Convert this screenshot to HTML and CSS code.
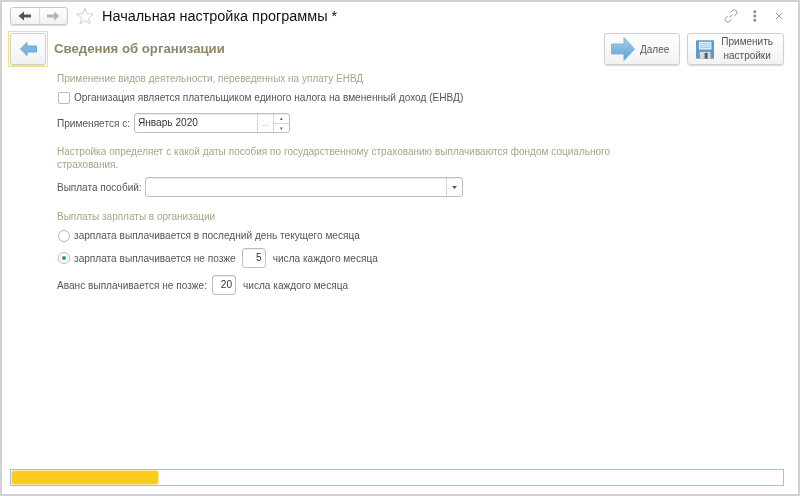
FILE: index.html
```html
<!DOCTYPE html>
<html lang="ru">
<head>
<meta charset="utf-8">
<title>Начальная настройка программы</title>
<link rel="stylesheet" href="styles.css">
</head>
<body>
<div class="window">
  <header class="titlebar">
    <div class="nav">
      <button class="nav-btn"><svg width="14" height="10" viewBox="0 0 14 10"><path d="M0.5 5 L6 0.5 V3.5 H13 V6.5 H6 V9.5 Z" fill="#555"/></svg></button>
      <button class="nav-btn"><svg width="14" height="10" viewBox="0 0 14 10"><path d="M13.5 5 L8 0.5 V3.5 H1 V6.5 H8 V9.5 Z" fill="#b4b4b4"/></svg></button>
    </div>
    <svg class="star" width="18" height="18" viewBox="0 0 18 18"><path d="M9 1 L11.2 6.7 L17.2 7.1 L12.5 11 L14 16.9 L9 13.6 L4 16.9 L5.5 11 L0.8 7.1 L6.8 6.7 Z" fill="#fff" stroke="#d0d0d0"/></svg>
    <h1 class="title">Начальная настройка программы *</h1>
    <div class="win-tools">
      <svg width="14" height="14" viewBox="0 0 14 14" fill="none" stroke="#999" stroke-width="1"><path d="M5.5 8.5 L8.5 5.5 M6.5 3.5 L8.5 1.6 a2.2 2.2 0 0 1 3.6 3.6 L10.2 7.2 M7.5 10.5 L5.5 12.4 a2.2 2.2 0 0 1 -3.6 -3.6 L3.8 6.8"/></svg>
      <svg width="4" height="12" viewBox="0 0 4 12" fill="#888"><rect x="0.5" y="0.5" width="2.6" height="2.6"/><rect x="0.5" y="4.7" width="2.6" height="2.6"/><rect x="0.5" y="8.9" width="2.6" height="2.6"/></svg>
      <svg width="8" height="8" viewBox="0 0 8 8" stroke="#999" stroke-width="1"><path d="M1 1 L7 7 M7 1 L1 7"/></svg>
    </div>
  </header>

  <div class="toolbar">
    <div class="focus-ring">
      <button class="btn back-btn"><svg width="17" height="14" viewBox="0 0 17 14"><path d="M0.5 7 L7 0.5 V4 H16.5 V10 H7 V13.5 Z" fill="#7db5de" stroke="#6fa5cf"/></svg></button>
    </div>
    <h2 class="section">Сведения об организации</h2>
    <button class="btn next-btn"><svg width="24" height="24" viewBox="0 0 24 24"><defs><linearGradient id="a" x1="0" y1="0" x2="0" y2="1"><stop offset="0" stop-color="#a9d2ee"/><stop offset="1" stop-color="#5a9fd2"/></linearGradient></defs><path d="M0.5 7 H13 V0.5 L23.5 12 L13 23.5 V17 H0.5 Z" fill="url(#a)" stroke="#7fb3d8"/></svg><span>Далее</span></button>
    <button class="btn apply-btn"><svg width="19" height="19" viewBox="0 0 19 19"><rect width="19" height="19" rx="1" fill="#5b9bcb"/><rect x="3" y="1.5" width="13" height="8" fill="#e6eef4"/><path d="M4 3.5 H15 M4 5.5 H15 M4 7.5 H15" stroke="#a9c3d6"/><rect x="4" y="12" width="11" height="7" fill="#d8d8d8"/><rect x="9" y="13" width="3" height="6" fill="#555"/></svg><span>Применить<br>настройки</span></button>
  </div>

  <main class="content">
    <p class="group first">Применение видов деятельности, переведенных на уплату ЕНВД</p>
    <label class="row check-row"><span class="checkbox"></span><span class="text">Организация является плательщиком единого налога на вмененный доход (ЕНВД)</span></label>
    <div class="row field-row date-row">
      <span class="text date-label">Применяется с:</span>
      <div class="input date-input">
        <span class="value">Январь 2020</span>
        <span class="cell dots">...</span>
        <span class="cell spin"><i>▴</i><i>▾</i></span>
      </div>
    </div>
    <p class="group note">Настройка определяет с какой даты пособия по государственному страхованию выплачиваются фондом социального страхования.</p>
    <div class="row field-row pay-row">
      <span class="text pay-label">Выплата пособий:</span>
      <div class="input pay-input">
        <span class="value"></span>
        <span class="cell arrow"><svg width="5" height="3" viewBox="0 0 5 3"><path d="M0 0 H5 L2.5 3 Z" fill="#555"/></svg></span>
      </div>
    </div>
    <p class="group salary">Выплаты зарплаты в организации</p>
    <label class="row radio-row"><span class="radio"></span><span class="text">зарплата выплачивается в последний день текущего месяца</span></label>
    <div class="row field-row radio2-row">
      <span class="radio on"></span>
      <span class="text">зарплата выплачивается не позже</span>
      <span class="input num">5</span>
      <span class="text">числа каждого месяца</span>
    </div>
    <div class="row field-row advance-row">
      <span class="text">Аванс выплачивается не позже:</span>
      <span class="input num">20</span>
      <span class="text">числа каждого месяца</span>
    </div>
  </main>

  <div class="progress"><div class="progress-fill"></div></div>
</div>
</body>
</html>
```
FILE: styles.css
```css
* { box-sizing: border-box; }
html, body { margin: 0; padding: 0; }
body { width: 800px; height: 496px; overflow: hidden; background: #fff; font-family: "Liberation Sans", Arial, sans-serif; }
button { font-family: inherit; padding: 0; margin: 0; }

.window { width: 800px; height: 496px; border: 2px solid #d2d2d2; display: flex; flex-direction: column; background: #fff; filter: blur(0.3px); }

.titlebar { height: 29px; padding: 5px 0 0 8px; display: flex; align-items: flex-start; flex: none; }
.nav { width: 58px; height: 18px; display: flex; border: 1px solid #c8c8c8; border-radius: 3px; background: linear-gradient(#fff, #f1f1f1); box-shadow: 0 1px 1px #ddd; }
.nav-btn { flex: 1; border: 0; background: none; display: flex; align-items: center; justify-content: center; }
.nav-btn + .nav-btn { border-left: 1px solid #ddd; }
.star { margin-left: 8px; flex: none; }
.title { margin: 0 0 0 8px; font-size: 14.45px; line-height: 18px; font-weight: 400; color: #111; flex: 1; }
.win-tools { display: flex; align-items: center; gap: 0; height: 18px; padding-right: 15px; }
.win-tools svg:nth-child(1) { margin-right: 15px; }
.win-tools svg:nth-child(2) { margin-right: 18px; }

.toolbar { height: 38px; display: flex; align-items: flex-start; padding: 0 14px 0 6px; flex: none; }
.focus-ring { width: 40px; height: 36px; border: 1px solid #f7dc83; padding: 1px; flex: none; }
.btn { border: 1px solid #d0d0d0; border-radius: 3px; background: linear-gradient(#fff, #f2f2f2); box-shadow: 0 1px 1px #d8d8d8; display: flex; align-items: center; }
.back-btn { width: 36px; height: 32px; justify-content: center; }
.section { margin: 0 0 0 6px; flex: 1; font-size: 13.2px; line-height: 36px; font-weight: 700; color: #8e8866; }
.next-btn { width: 76px; height: 32px; margin-top: 2px; padding-left: 6px; gap: 5px; font-size: 10px; color: #555; }
.apply-btn { width: 97px; height: 32px; margin: 2px 0 0 7px; padding-left: 8px; gap: 7px; font-size: 10px; line-height: 14px; color: #555; }
.apply-btn span { flex: 1; text-align: center; padding-right: 10px; }

.content { flex: 1; padding: 0 0 0 55px; font-size: 10.1px; color: #555; }
.group { margin: 0; font-size: 10px; line-height: 13px; color: #a9a488; }
.first { margin-top: 3px; }
.row { display: flex; align-items: center; }
.text { white-space: nowrap; }
.check-row { height: 13px; margin-top: 6px; }
.checkbox { width: 12px; height: 12px; border: 1px solid #bbb; border-radius: 2px; margin: 0 4px 0 1px; background: #fff; flex: none; }
.field-row { height: 20px; }
.date-row { margin-top: 9px; }
.input { height: 20px; border: 1px solid #bdbdbd; border-radius: 3px; background: #fff; box-shadow: inset 0 1px 1px #eee; display: flex; align-items: stretch; color: #333; }
.value { flex: 1; padding-left: 3px; line-height: 18px; font-size: 10.1px; }
.cell { border-left: 1px solid #d5d5d5; display: flex; align-items: center; justify-content: center; color: #999; flex: none; }
.date-label { width: 72px; }
.date-input { width: 156px; margin-left: 5px; }
.dots { width: 16px; font-size: 8px; }
.spin { width: 16px; flex-direction: column; font-style: normal; }
.spin i { flex: 1; width: 100%; font-size: 5px; line-height: 9px; text-align: center; font-style: normal; color: #555; }
.spin i + i { border-top: 1px solid #d5d5d5; }
.note { width: 570px; margin-top: 12px; word-spacing: 0.18px; }
.pay-row { margin-top: 6px; }
.pay-label { width: 84px; font-size: 10px; }
.pay-input { width: 318px; margin-left: 4px; }
.arrow { width: 16px; }
.salary { margin-top: 13px; }
.radio-row { height: 13px; margin-top: 6px; }
.radio { width: 12px; height: 12px; border: 1px solid #bbb; border-radius: 50%; margin-right: 4px; margin-left: 1px; background: #fff; flex: none; display: flex; align-items: center; justify-content: center; }
.radio.on::after { content: ""; width: 4px; height: 4px; border-radius: 50%; background: #2e9b6b; }
.radio2-row { margin-top: 6px; }
.num { width: 24px; justify-content: flex-end; padding-right: 3px; line-height: 18px; }
.radio2-row .num { margin: 0 7px 0 6px; }
.advance-row { margin-top: 7px; }
.advance-row .num { margin: 0 7px 0 5px; }

.progress { height: 17px; margin: 0 14px 8px 8px; border: 1px solid #a9bfd2; padding: 1px; flex: none; }
.progress-fill { width: 146px; height: 100%; background: #fbcb1f; border-radius: 2px; box-shadow: 0 0 0 1px #fdeaa0; }
```
